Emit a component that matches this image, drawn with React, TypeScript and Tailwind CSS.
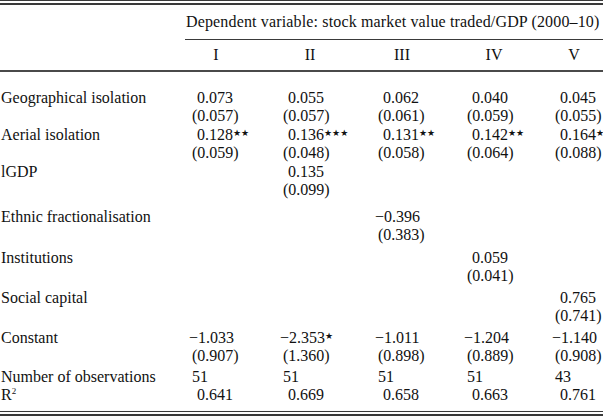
import React from "react";

type Row = { label: React.ReactNode; cells: string[]; h: number; mt?: number; plain?: boolean };

const rows: Row[] = [
  { label: "Geographical isolation", cells: ["0.073", "0.055", "0.062", "0.040", "0.045"], h: 18, mt: 14 },
  { label: "", cells: ["(0.057)", "(0.057)", "(0.061)", "(0.059)", "(0.055)"], h: 19 },
  { label: "Aerial isolation", cells: ["0.128**", "0.136***", "0.131**", "0.142**", "0.164*"], h: 18 },
  { label: "", cells: ["(0.059)", "(0.048)", "(0.058)", "(0.064)", "(0.088)"], h: 19 },
  { label: "lGDP", cells: ["", "0.135", "", "", ""], h: 18 },
  { label: "", cells: ["", "(0.099)", "", "", ""], h: 19 },
  { label: "Ethnic fractionalisation", cells: ["", "", "−0.396", "", ""], h: 18, mt: 8 },
  { label: "", cells: ["", "", "(0.383)", "", ""], h: 18 },
  { label: "Institutions", cells: ["", "", "", "0.059", ""], h: 18, mt: 5 },
  { label: "", cells: ["", "", "", "(0.041)", ""], h: 18 },
  { label: "Social capital", cells: ["", "", "", "", "0.765"], h: 18, mt: 4 },
  { label: "", cells: ["", "", "", "", "(0.741)"], h: 18 },
  { label: "Constant", cells: ["−1.033", "−2.353*", "−1.011", "−1.204", "−1.140"], h: 18, mt: 4 },
  { label: "", cells: ["(0.907)", "(1.360)", "(0.898)", "(0.889)", "(0.908)"], h: 19 },
  { label: "Number of observations", cells: ["51", "51", "51", "51", "43"], h: 18, mt: 2, plain: true },
  {
    label: (
      <>
        R<span className="relative -top-[6px] text-[9px] leading-none">2</span>
      </>
    ),
    cells: ["0.641", "0.669", "0.658", "0.663", "0.761"],
    h: 18,
  },
];

// small nudges so each numeral sits where the reference puts it
const numerals = [
  { n: "I", cls: "ml-0" },
  { n: "II", cls: "ml-[3px]" },
  { n: "III", cls: "ml-0" },
  { n: "IV", cls: "ml-[3px]" },
  { n: "V", cls: "-ml-[5px]" },
];

function Cell({ value, plain }: { value: string; plain?: boolean }) {
  if (!value) return <div />;
  const stars = value.match(/\*+$/)?.[0] ?? "";
  const num = value.replace(/\*+$/, "");
  let offset = "pl-[5px]";
  if (plain || num.startsWith("(")) offset = "pl-0";
  else if (num.startsWith("−")) offset = "-ml-[3px]";
  return (
    <div className={`whitespace-nowrap ${offset}`}>
      {num}
      {stars && (
        <span className="font-['DejaVu_Sans'] text-[9px] align-[4px] leading-none">
          {"★".repeat(stars.length)}
        </span>
      )}
    </div>
  );
}

export default function App() {
  return (
    <div className="w-[603px] h-[418px] bg-white text-[#111] font-['Liberation_Serif',serif] text-[16px] overflow-hidden">
      {/* top double rule */}
      <div className="h-px bg-[#3a3a3a]" />
      <div className="h-[2px]" />
      <div className="h-[2px] bg-[#3a3a3a]" />

      {/* spanner header */}
      <div className="ml-[185px] h-[35px] flex items-center border-b border-[#3a3a3a] whitespace-nowrap pl-px tracking-[0.15px]">
        Dependent variable: stock market value traded/GDP (2000–10)
      </div>

      <div className="grid grid-cols-[192px_91px_95px_89px_88px_1fr] h-[30px] items-center">
        <div />
        {numerals.map((x) => (
          <div key={x.n} className={`w-[48px] text-center ${x.cls}`}>
            {x.n}
          </div>
        ))}
      </div>

      <div className="h-[2px] bg-[#4a4a4a]" />

      {rows.map((r, i) => (
        <div
          key={i}
          className="grid grid-cols-[192px_91px_95px_89px_88px_1fr] items-center"
          style={{ height: r.h, marginTop: r.mt ?? 0 }}
        >
          <div className="pl-px whitespace-nowrap">{r.label}</div>
          {r.cells.map((c, j) => (
            <Cell key={j} value={c} plain={r.plain} />
          ))}
        </div>
      ))}

      {/* bottom double rule */}
      <div className="mt-[10px] h-px bg-[#3a3a3a]" />
      <div className="h-[2px]" />
      <div className="h-[2px] bg-[#3a3a3a]" />
    </div>
  );
}
